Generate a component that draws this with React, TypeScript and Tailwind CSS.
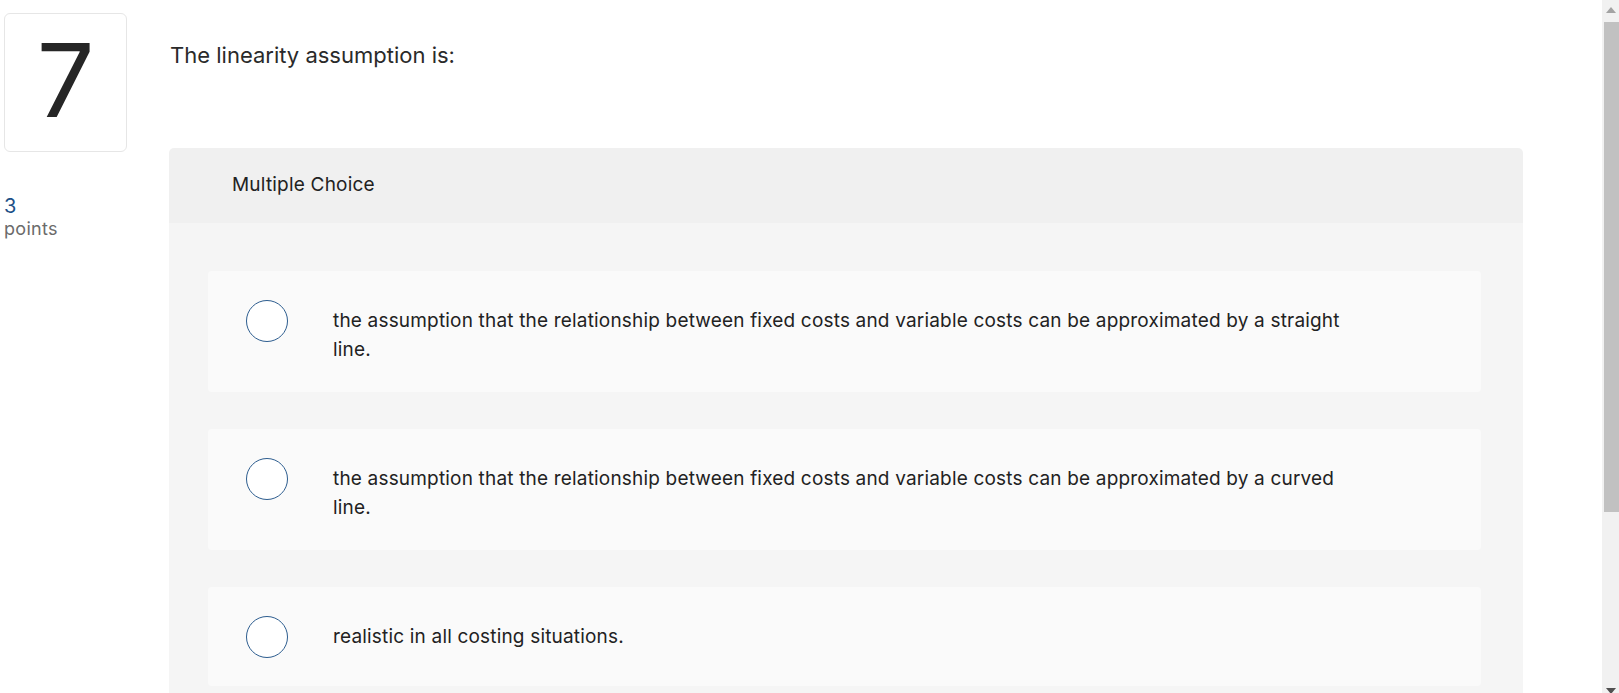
const FONT = { fontFamily: 'Inter, "Open Sans", Arial, sans-serif' };

const OPTIONS = [
  'the assumption that the relationship between fixed costs and variable costs can be approximated by a straight line.',
  'the assumption that the relationship between fixed costs and variable costs can be approximated by a curved line.',
  'realistic in all costing situations.',
];

function Radio() {
  return <span className="block h-[42px] w-[42px] shrink-0 rounded-full border-[1.5px] border-[#2d5d8f] bg-white" />;
}

function Scrollbar() {
  return (
    <div className="flex h-full w-[17px] shrink-0 flex-col bg-[#f1f1f1]">
      <div className="flex h-[22px] items-start justify-center pt-[7px]">
        <span className="h-0 w-0 border-x-[5px] border-b-[6px] border-x-transparent border-b-[#a3a3a3]" />
      </div>
      <div className="ml-[2px] h-[490px] bg-[#c1c1c1]" />
      <div className="flex-1" />
      <div className="flex h-[5px] justify-center">
        <span className="h-0 w-0 border-x-[5px] border-t-[6px] border-x-transparent border-t-[#505050]" />
      </div>
    </div>
  );
}

export default function App() {
  return (
    <div className="flex h-[693px] w-[1619px] overflow-hidden bg-white text-[#222]" style={FONT}>
      <div className="flex flex-1">
        {/* left rail: question number + points */}
        <div className="w-[169px] shrink-0 pl-[4px] pt-[13px]">
          <div className="flex h-[139px] w-[123px] items-center justify-center rounded-[6px] border border-[#e6e6e6] pb-[6px]">
            <span className="text-[102px] font-normal leading-none text-[#262626]">7</span>
          </div>
          <div className="mt-[42px] text-[20px] leading-[24px] text-[#1d5087]">3</div>
          <div className="text-[18px] leading-[22px] tracking-[0.3px] text-[#6b6b6b]">points</div>
        </div>

        <div className="flex-1 pr-[79px]">
          <div className="pl-[1px] pt-[40px] text-[22px] leading-[30px] text-[#2a2a2a]">The linearity assumption is:</div>

          <div className="mt-[78px] overflow-hidden rounded-t-[5px]">
            <div className="flex h-[75px] items-center bg-[#f0f0f0] pl-[63px] text-[19px] tracking-[0.2px] text-[#222]">
              Multiple Choice
            </div>
            <div className="flex flex-col gap-[37px] bg-[#f5f5f5] pb-[20px] pl-[39px] pr-[42px] pt-[48px]">
              {OPTIONS.map((text) => (
                <div key={text} className="flex items-start rounded-[4px] bg-[#fafafa] pb-[28px] pl-[38px] pt-[29px]">
                  <Radio />
                  <p className="ml-[45px] mt-[6px] w-[1020px] text-[19px] leading-[29px] tracking-[0.18px] text-[#222]">{text}</p>
                </div>
              ))}
            </div>
          </div>
        </div>
      </div>
      <Scrollbar />
    </div>
  );
}
